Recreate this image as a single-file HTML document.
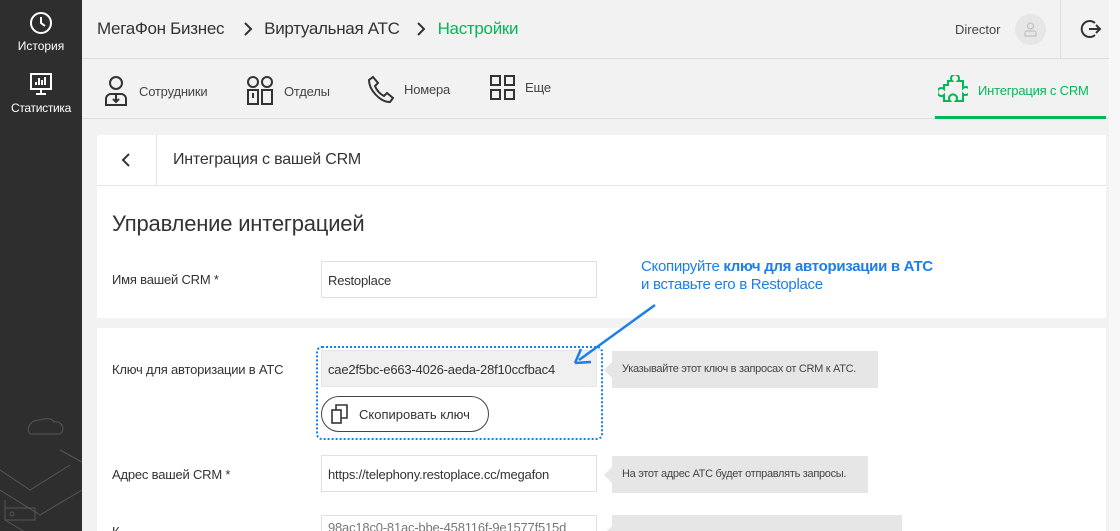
<!DOCTYPE html>
<html style="overflow:hidden;height:531px"><head><meta charset="utf-8"><style>
*{box-sizing:border-box;margin:0;padding:0}
body{width:1120px;height:531px;overflow:hidden;background:#f2f2f2;font-family:"Liberation Sans",sans-serif;color:#333;position:relative}
.abs{position:absolute}
.side{left:0;top:0;width:82px;height:531px;background:#2e2e2e;color:#fff;font-size:12px;text-align:center}
.card{background:#fff;left:97px;width:1009px}
.inp{position:absolute;left:321px;width:276px;height:37px;border:1px solid #e0e0e0;background:#fff;font-size:13px;padding:11px 6px;color:#333;white-space:nowrap;overflow:hidden;letter-spacing:-0.2px}
.lbl{position:absolute;left:112px;font-size:13px;color:#333;letter-spacing:-0.2px}
.tip{position:absolute;left:612px;height:37px;background:#e6e6e6;font-size:11px;padding:12px 10px;color:#444;white-space:nowrap;letter-spacing:-0.3px}
.tip:before{content:"";position:absolute;left:-8px;top:11px;border-right:8px solid #e6e6e6;border-top:8px solid transparent;border-bottom:8px solid transparent}
.tab{position:absolute;top:75px;font-size:13px;color:#444;display:flex;align-items:center;gap:10px;letter-spacing:-0.2px}
</style></head><body>
<div class="abs side">
 <svg class="abs" style="left:29px;top:11px" width="24" height="24" viewBox="0 0 24 24" fill="none" stroke="#fff" stroke-width="2"><circle cx="12" cy="12" r="10"/><path d="M12 6v6l4 3"/></svg>
 <div class="abs" style="left:0;width:82px;top:39px">История</div>
 <svg class="abs" style="left:29px;top:72px" width="24" height="24" viewBox="0 0 24 24" fill="none" stroke="#fff" stroke-width="2"><rect x="2" y="2" width="20" height="15"/><path d="M7 13v-3M10 13V6M13 13V8M16 13V5M12 17v4M7 22h10"/></svg>
 <div class="abs" style="left:0;width:82px;top:101px;letter-spacing:-0.3px">Статистика</div>
 <svg class="abs" style="left:0;top:380px" width="82" height="151" viewBox="0 0 82 151" fill="none" stroke="#555" stroke-width="1"><path d="M40 40c-10 0-14 8-10 14h30c6-4 2-14-6-12-2-4-8-4-14-2z"/><path d="M0 90l30 20 40-25M0 110l40 25 42-25M5 120v20l30 18M60 70l22 12"/><rect x="5" y="128" width="30" height="12"/><circle cx="12" cy="134" r="2"/></svg>
</div>
<div class="abs" style="left:97px;top:19px;font-size:17px;color:#333;letter-spacing:-0.3px;white-space:nowrap">МегаФон Бизнес<span style="display:inline-block;width:40px"></span>Виртуальная АТС<span style="display:inline-block;width:38px"></span><span style="color:#00b956">Настройки</span></div>
<svg class="abs" style="left:243px;top:21px" width="10" height="16" viewBox="0 0 10 16" fill="none" stroke="#333" stroke-width="2"><path d="M2 2l6 6-6 6"/></svg>
<svg class="abs" style="left:416px;top:21px" width="10" height="16" viewBox="0 0 10 16" fill="none" stroke="#333" stroke-width="2"><path d="M2 2l6 6-6 6"/></svg>
<div class="abs" style="left:955px;top:22px;font-size:13px;color:#444">Director</div>
<div class="abs" style="left:1015px;top:14px;width:31px;height:31px;border-radius:50%;background:#e6e6e6"></div>
<svg class="abs" style="left:1022px;top:20px" width="17" height="18" viewBox="0 0 17 18" fill="none" stroke="#bbb"><circle cx="8.5" cy="6" r="3"/><path d="M3 16v-3a2 2 0 0 1 2-2h7a2 2 0 0 1 2 2v3z"/></svg>
<div class="abs" style="left:1060px;top:0;width:1px;height:58px;background:#ddd"></div>
<svg class="abs" style="left:1080px;top:18px" width="22" height="22" viewBox="0 0 22 22" fill="none" stroke="#333" stroke-width="2"><path d="M15 5a8 8 0 1 0 0 12M9 11h11M16 7l4 4-4 4"/></svg>
<div class="abs" style="left:82px;top:58px;width:1028px;height:1px;background:#ddd"></div>
<div class="tab" style="left:103px"><svg width="26" height="32" viewBox="0 0 26 32" fill="none" stroke="#333" stroke-width="2"><circle cx="13" cy="8" r="6"/><path d="M3 30v-6a5 5 0 0 1 5-5h10a5 5 0 0 1 5 5v6zM13 20v6M10 24l3 3 3-3"/></svg>Сотрудники</div>
<div class="tab" style="left:246px"><svg width="28" height="32" viewBox="0 0 28 32" fill="none" stroke="#333" stroke-width="2"><circle cx="7" cy="7" r="5"/><circle cx="21" cy="7" r="5"/><path d="M2 15h10v14H2zM16 15h10v14H16zM7 18v5"/></svg>Отделы</div>
<div class="tab" style="left:368px"><svg width="26" height="28" viewBox="0 0 26 28" fill="none" stroke="#333" stroke-width="2"><path d="M5 2l5 6-3 3c2 5 5 8 9 10l3-3 6 5-3 4C12 27 1 15 1 5z"/></svg>Номера</div>
<div class="tab" style="left:490px"><svg width="25" height="25" viewBox="0 0 25 25" fill="none" stroke="#333" stroke-width="2"><rect x="1" y="1" width="9" height="9"/><rect x="15" y="1" width="9" height="9"/><rect x="1" y="15" width="9" height="9"/><rect x="15" y="15" width="9" height="9"/></svg>Еще</div>
<div class="tab" style="left:938px;color:#00b956"><svg width="30" height="30" viewBox="0 0 30 30" fill="none" stroke="#00b956" stroke-width="2"><path d="M10 6h4a4 4 0 1 1 6 0h5v7a4 4 0 1 1 0 6v7h-7a4 4 0 1 0-6 0H6v-6a4 4 0 1 1 0-6V10h4z"/></svg>Интеграция с CRM</div>
<div class="abs" style="left:82px;top:118px;width:1028px;height:1px;background:#ddd"></div>
<div class="abs" style="left:935px;top:116px;width:171px;height:3px;background:#00b956"></div>
<div class="abs" style="left:1109px;top:0;width:11px;height:531px;background:#f7f7f7"></div>

<div class="abs card" style="top:135px;height:183px"></div>
<div class="abs" style="left:97px;top:185px;width:1009px;height:1px;background:#e5e5e5"></div>
<div class="abs" style="left:156px;top:135px;width:1px;height:50px;background:#e5e5e5"></div>
<svg class="abs" style="left:121px;top:152px" width="10" height="16" viewBox="0 0 10 16" fill="none" stroke="#333" stroke-width="2"><path d="M8 2L2 8l6 6"/></svg>
<div class="abs" style="left:173px;top:151px;font-size:16px;color:#333;letter-spacing:-0.2px">Интеграция с вашей CRM</div>
<div class="abs" style="left:112px;top:211px;font-size:22px;color:#333;letter-spacing:-0.2px">Управление интеграцией</div>
<div class="lbl" style="top:272px">Имя вашей CRM *</div>
<div class="inp" style="top:261px">Restoplace</div>
<div class="abs" style="left:641px;top:258px;font-size:15px;line-height:18px;color:#1a7fe8;letter-spacing:-0.3px">Скопируйте <b>ключ для авторизации в АТС</b><br>и вставьте его в Restoplace</div>

<div class="abs card" style="top:328px;height:203px"></div>
<div class="lbl" style="top:362px">Ключ для авторизации в АТС</div>
<div class="inp" style="top:350px;background:#f0f0f0;border-color:#e6e6e6">cae2f5bc-e663-4026-aeda-28f10ccfbac4</div>
<div class="abs" style="left:321px;top:396px;width:168px;height:36px;border:1px solid #444;border-radius:18px;font-size:13px;padding:10px 0 0 37px;color:#333">Скопировать ключ</div>
<svg class="abs" style="left:331px;top:404px" width="18" height="20" viewBox="0 0 18 20" fill="none" stroke="#333" stroke-width="1.6"><rect x="1" y="6" width="9" height="13"/><path d="M5 6V1h11v13h-6"/></svg>
<div class="abs" style="left:316px;top:346px;width:287px;height:94px;border:2px dotted #1a7fe8;border-radius:6px"></div>
<div class="tip" style="top:351px;width:266px">Указывайте этот ключ в запросах от CRM к АТС.</div>
<svg class="abs" style="left:570px;top:300px" width="90" height="70" viewBox="0 0 90 70"><path d="M85 5L9 60" stroke="#1a7fe8" stroke-width="2.5" fill="none"/><path d="M5 63l6-14M5 63l16-1" stroke="#1a7fe8" stroke-width="2.5" fill="none"/></svg>
<div class="lbl" style="top:467px">Адрес вашей CRM *</div>
<div class="inp" style="top:455px">https://telephony.restoplace.cc/megafon</div>
<div class="tip" style="top:456px;width:256px">На этот адрес АТС будет отправлять запросы.</div>
<div class="lbl" style="top:524px">К</div>
<div class="inp" style="top:515px;color:#777;height:16px;padding-top:4px">98ac18c0-81ac-bbe-458116f-9e1577f515d</div>
<div class="tip" style="top:515px;width:290px;height:16px">&nbsp;</div>
</body></html>
